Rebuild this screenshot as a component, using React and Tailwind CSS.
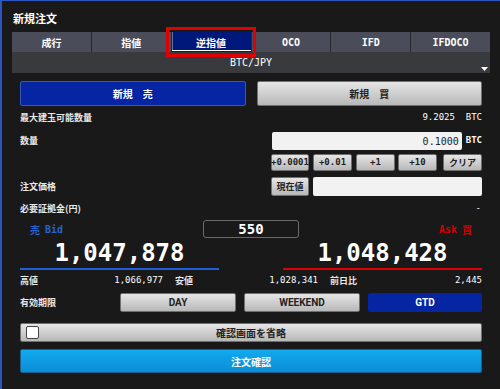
export default function App() {
  const jp = "font-['Noto_Sans_CJK_JP',sans-serif]";
  const mono = "font-['DejaVu_Sans_Mono',monospace]";
  const grayBtn =
    "bg-linear-to-b from-[#e6e6e6] to-[#b8b8b8] border border-[#6f6f6f] rounded-[2px] text-[#222] flex items-center justify-center";
  const tabs = ["成行", "指値", "逆指値", "OCO", "IFD", "IFDOCO"];
  return (
    <div className={`w-[500px] h-[389px] bg-[#191919] border-t border-t-[#2c55c4] border-l-2 border-l-[#2c55c4] relative overflow-hidden text-[#e8e8e8] ${jp}`}>
      <div className="h-[31px] pl-[11px] pt-[9px] text-[11px] font-bold leading-[16px] text-white">新規注文</div>

      <div className="mx-[10px] relative">
        <div className="grid grid-cols-6 gap-px bg-[#26272b] h-[20px]">
          {tabs.map((t, i) => (
            <div
              key={t}
              className={
                i === 2
                  ? "bg-[#00187a] flex items-center justify-center text-[10px] font-bold text-white shadow-[inset_0_-1px_0_#00187a,inset_0_-2px_0_#ffffff,inset_1px_0_0_#6a6f99]"
                  : `bg-[#4a4c59] flex items-center justify-center text-[10px] font-bold text-white ${i > 2 ? mono : ""}`
              }
            >
              {t}
            </div>
          ))}
        </div>
        <div className="h-[21px] bg-[#393a3e] relative flex items-center justify-center">
          <span className={`${mono} text-[10px] text-white`}>BTC/JPY</span>
          <svg className="absolute right-[2px] bottom-[2px]" width="7" height="4" viewBox="0 0 7 4">
            <polygon points="0,0 7,0 3.5,4" fill="#ffffff" />
          </svg>
        </div>
        <div className="absolute left-[154px] top-[-5px] w-[90px] h-[30px] border-[3px] border-[#e00000]" />
      </div>

      <div className="pl-[18px] pr-[18px]">
        <div className="flex gap-[11px] mt-[8px] h-[25px]">
          <div className="flex-1 bg-[#0625a2] border border-[#3b55b8] rounded-[2px] flex items-center justify-center text-[10px] font-bold text-white">新規　売</div>
          <div className={`flex-1 ${grayBtn} text-[10px] font-bold`}>新規　買</div>
        </div>

        <div className="h-[24px] flex items-center justify-between">
          <span className="text-[9px] font-bold">最大建玉可能数量</span>
          <span className={`${mono} text-[9px] text-white`}>9.2025&nbsp;&nbsp;BTC</span>
        </div>

        <div className="h-[18px] mt-[2px] flex items-center">
          <span className="text-[9px] font-bold flex-1">数量</span>
          <div className={`w-[190px] h-[18px] bg-[#f2f2f2] rounded-[2px] flex items-center justify-end pr-[3px] ${mono} text-[10px] text-[#222]`}>0.1000</div>
          <span className={`${mono} text-[9px] font-bold text-white ml-[4px]`}>BTC</span>
        </div>

        <div className={`h-[17px] mt-[4px] flex justify-end ${mono} text-[9px] font-bold`}>
          <div className={`w-[38px] ${grayBtn}`}>+0.0001</div>
          <div className={`w-[39px] ml-[4px] ${grayBtn}`}>+0.01</div>
          <div className={`w-[39px] ml-[4px] ${grayBtn}`}>+1</div>
          <div className={`w-[39px] ml-[3px] ${grayBtn}`}>+10</div>
          <div className={`w-[39px] ml-[6px] ${grayBtn} ${jp}`}>クリア</div>
        </div>

        <div className="h-[19px] mt-[6px] flex items-center">
          <span className="text-[9px] font-bold flex-1">注文価格</span>
          <div className={`w-[38px] h-[19px] ${grayBtn} text-[9px] font-bold`}>現在値</div>
          <div className="w-[169px] h-[19px] ml-[4px] bg-[#f2f2f2] rounded-[2px]" />
        </div>

        <div className="h-[22px] mt-[2px] flex items-center justify-between">
          <span className="text-[9px] font-bold">必要証拠金(円)</span>
          <span className={`${mono} text-[9px] text-white pr-[1px]`}>-</span>
        </div>

        <div className="h-[18px] grid grid-cols-[1fr_96px_1fr] items-center">
          <span className="pl-[10px] text-[10px] text-[#2463d6] font-bold flex gap-[5px]">
            <span>売</span><span className={mono}>Bid</span>
          </span>
          <div className={`h-[18px] border border-[#6a6a6a] rounded-[3px] flex items-center justify-center ${mono} text-[14px] font-bold text-white`}>550</div>
          <span className="pr-[10px] text-[10px] text-[#d40000] font-bold flex justify-end gap-[5px]">
            <span className={mono}>Ask</span><span>買</span>
          </span>
        </div>

        <div className="flex justify-between">
          <div className="w-[199px]">
            <div className={`h-[30px] text-center ${mono} text-[24px] font-bold text-white leading-[30px]`}>1,047,878</div>
            <div className="h-[2px] bg-[#1f5fd8]" />
          </div>
          <div className="w-[199px]">
            <div className={`h-[30px] text-center ${mono} text-[24px] font-bold text-white leading-[30px]`}>1,048,428</div>
            <div className="h-[2px] bg-[#e00000]" />
          </div>
        </div>

        <div className="h-[22px] flex items-center gap-[12px] text-[9px]">
          <div className="w-[143px] flex justify-between">
            <span className="font-bold">高値</span>
            <span className={`${mono} text-white`}>1,066,977</span>
          </div>
          <div className="w-[143px] flex justify-between">
            <span className="font-bold">安値</span>
            <span className={`${mono} text-white`}>1,028,341</span>
          </div>
          <div className="flex-1 flex justify-between">
            <span className="font-bold">前日比</span>
            <span className={`${mono} text-white`}>2,445</span>
          </div>
        </div>

        <div className="h-[19px] mt-[1px] flex items-center">
          <span className="text-[9px] font-bold w-[100px]">有効期限</span>
          <div className="flex-1 flex gap-[8px] h-[19px] text-[10px] font-bold">
            <div className={`flex-1 ${grayBtn} font-['Roboto',sans-serif]`}>DAY</div>
            <div className={`flex-1 ${grayBtn} font-['Roboto',sans-serif]`}>WEEKEND</div>
            <div className="flex-1 bg-[#0625a2] rounded-[2px] flex items-center justify-center text-white font-['Roboto',sans-serif]">GTD</div>
          </div>
        </div>

        <div className={`h-[19px] mt-[11px] ${grayBtn} relative text-[10px] font-bold`}>
          <div className="absolute left-[5px] top-[2px] w-[13px] h-[13px] bg-white border border-[#444] rounded-[2px]" />
          確認画面を省略
        </div>

        <div className="h-[24px] mt-[7px] bg-linear-to-b from-[#13a9ee] to-[#0a8dd6] border border-[#1c5f8c] rounded-[2px] flex items-center justify-center text-[10px] font-bold text-white">
          注文確認
        </div>
      </div>
    </div>
  );
}
